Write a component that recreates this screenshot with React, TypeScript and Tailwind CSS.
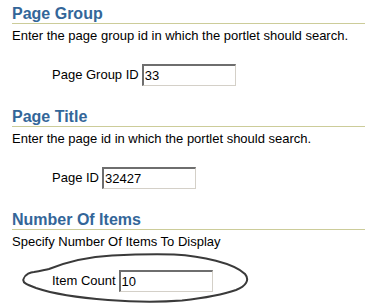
import React from "react";

type Field = {
  title: string;
  hint: string;
  label: string;
  value: string;
  circled?: boolean;
};

const fields: Field[] = [
  {
    title: "Page Group",
    hint: "Enter the page group id in which the portlet should search.",
    label: "Page Group ID",
    value: "33",
  },
  {
    title: "Page Title",
    hint: "Enter the page id in which the portlet should search.",
    label: "Page ID",
    value: "32427",
  },
  {
    title: "Number Of Items",
    hint: "Specify Number Of Items To Display",
    label: "Item Count",
    value: "10",
    circled: true,
  },
];

function HandDrawnOval() {
  return (
    <svg
      className="absolute left-[10px] top-[-17px] pointer-events-none"
      width="230"
      height="51"
      viewBox="0 0 230 51"
      fill="none"
    >
      <path
        d="M1.5,26 C3,21 9,19 12,19 C18,18 22,17 27,16 C42,10 62,4 90,2.5 C110,1.5 132,1 152,1.5 C180,3 212,10 223,21 C228,27 224,33 214,37 C200,42 182,45 160,47.5 C140,49 112,49 86,47 C60,45 32,41 14,35 C6,32 0,30 1.5,26 Z"
        stroke="#3a3a3a"
        strokeWidth="2"
        strokeLinejoin="round"
      />
    </svg>
  );
}

function Section({ field, first }: { field: Field; first: boolean }) {
  return (
    <div className={first ? "pt-[5px]" : "pt-[22px]"}>
      <h2 className="text-[16px] leading-[18px] font-bold text-[#336699] border-b border-[#cccc99]">
        {field.title}
      </h2>
      <p className="mt-[4px] text-[13px] leading-[16px] text-black">{field.hint}</p>
      <div className="relative mt-[20px] flex items-center gap-[3px] pl-[40px]">
        {field.circled && <HandDrawnOval />}
        <label className="text-[13px] leading-[16px] text-black">{field.label}</label>
        <div className="w-[94px] h-[22px] flex items-center pl-[1px] border-t-2 border-l-2 border-t-[#6e6e6e] border-l-[#6e6e6e] border-b border-r border-b-[#d4d0c8] border-r-[#d4d0c8] bg-white text-[13px] leading-[16px] text-black">
          {field.value}
        </div>
      </div>
    </div>
  );
}

export default function App() {
  return (
    <div className="w-[365px] h-[307px] bg-white pl-[12px] font-['Liberation_Sans',Arial,sans-serif] overflow-hidden">
      {fields.map((f, i) => (
        <Section key={f.title} field={f} first={i === 0} />
      ))}
    </div>
  );
}
